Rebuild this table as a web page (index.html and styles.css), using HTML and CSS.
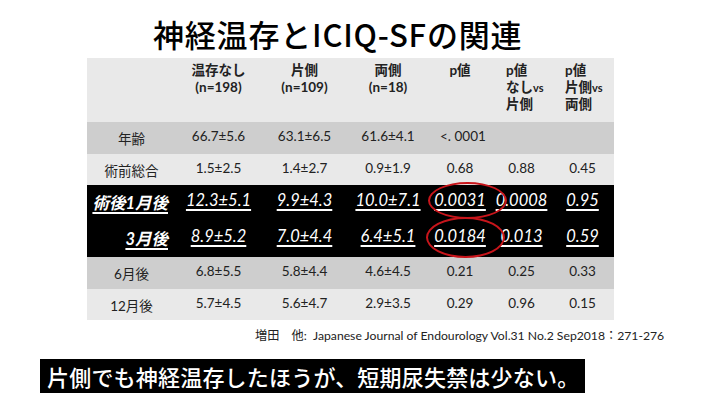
FILE: index.html
```html
<!DOCTYPE html>
<html lang="ja">
<head>
    <meta charset="UTF-8">
    <title>神経温存とICIQ-SFの関連</title>
    <link rel="stylesheet" href="styles.css">
</head>
<body>
    <div class="slide">
        <h1 class="title">神経温存とICIQ-SFの関連</h1>

        <div class="table-wrap">
            <table class="results">
                <colgroup>
                    <col class="c-label">
                    <col class="c-none">
                    <col class="c-one">
                    <col class="c-both">
                    <col class="c-p">
                    <col class="c-p2">
                    <col class="c-p3">
                </colgroup>
                <thead>
                    <tr class="head">
                        <th></th>
                        <th>温存なし<br>(n=198)</th>
                        <th>片側<br>(n=109)</th>
                        <th>両側<br>(n=18)</th>
                        <th>p値</th>
                        <th class="left">p値<br>なし<span class="vs">vs</span><br>片側</th>
                        <th class="left">p値<br>片側<span class="vs">vs</span><br>両側</th>
                    </tr>
                </thead>
                <tbody>
                    <tr class="dark">
                        <td>年齢</td>
                        <td>66.7±5.6</td>
                        <td>63.1±6.5</td>
                        <td>61.6±4.1</td>
                        <td class="lt">&lt;. 0001</td>
                        <td></td>
                        <td></td>
                    </tr>
                    <tr class="light">
                        <td>術前総合</td>
                        <td>1.5±2.5</td>
                        <td>1.4±2.7</td>
                        <td>0.9±1.9</td>
                        <td>0.68</td>
                        <td>0.88</td>
                        <td>0.45</td>
                    </tr>
                    <tr class="hl">
                        <td class="label"><u>術後1月後</u></td>
                        <td><u>12.3±5.1</u></td>
                        <td><u>9.9±4.3</u></td>
                        <td><u>10.0±7.1</u></td>
                        <td><u>0.0031</u></td>
                        <td><u>0.0008</u></td>
                        <td><u>0.95</u></td>
                    </tr>
                    <tr class="hl">
                        <td class="label"><u>3月後</u></td>
                        <td><u>8.9±5.2</u></td>
                        <td><u>7.0±4.4</u></td>
                        <td><u>6.4±5.1</u></td>
                        <td><u>0.0184</u></td>
                        <td><u>0.013</u></td>
                        <td><u>0.59</u></td>
                    </tr>
                    <tr class="dark">
                        <td>6月後</td>
                        <td>6.8±5.5</td>
                        <td>5.8±4.4</td>
                        <td>4.6±4.5</td>
                        <td>0.21</td>
                        <td>0.25</td>
                        <td>0.33</td>
                    </tr>
                    <tr class="light">
                        <td>12月後</td>
                        <td>5.7±4.5</td>
                        <td>5.6±4.7</td>
                        <td>2.9±3.5</td>
                        <td>0.29</td>
                        <td>0.96</td>
                        <td>0.15</td>
                    </tr>
                </tbody>
            </table>
            <!-- red circles drawn over the p values -->
            <div class="ring ring-1"></div>
            <div class="ring ring-2"></div>
        </div>

        <p class="source">増田　他:&nbsp; Japanese Journal of Endourology Vol.31 No.2 Sep2018：271-276</p>

        <div class="summary">片側でも神経温存したほうが、短期尿失禁は少ない。</div>
    </div>
</body>
</html>
```

FILE: styles.css
```css
body {
    margin: 0;
    background-color: #ffffff;
    font-family: "Lato", "Noto Sans CJK JP", sans-serif;
    color: #222;
}

.slide {
    width: 720px;
    height: 405px;
    overflow: hidden;
}

.title {
    margin: 0;
    padding: 12px 0 0 153px;
    height: 46px;
    font-family: "Noto Sans CJK JP", sans-serif;
    font-size: 31px;
    font-weight: 500;
    line-height: 44px;
    color: #000;
    letter-spacing: 0.8px;
}

.table-wrap {
    position: relative;
    margin-left: 87px;
    width: 527px;
}

.results {
    width: 527px;
    border-collapse: collapse;
    table-layout: fixed;
    font-size: 13.5px;
}

.c-label { width: 89px; }
.c-none  { width: 85px; }
.c-one   { width: 87px; }
.c-both  { width: 80px; }
.c-p     { width: 64px; }
.c-p2    { width: 59px; }
.c-p3    { width: 63px; }

.results th,
.results td {
    padding: 0;
    text-align: center;
    font-family: "Lato", "Noto Sans CJK JP", sans-serif;
}

.head {
    height: 64px;
    background-color: #e9e9e9;
}

.head th {
    vertical-align: top;
    padding-top: 4px;
    font-size: 13.5px;
    font-weight: 700;
    line-height: 17px;
    color: #222;
}

.head th.left {
    text-align: left;
    padding-left: 14px;
}

.head .vs {
    font-size: 11px;
}

.dark {
    height: 32px;
    background-color: #cecece;
}

.light {
    height: 31px;
    background-color: #e9e9e9;
}

.dark td,
.light td {
    vertical-align: top;
    padding-top: 6px;
}

.results td.lt {
    text-align: left;
    padding-left: 12px;
}

.hl {
    height: 36px;
    background-color: #000;
    color: #fff;
    font-size: 16.5px;
    font-style: italic;
}

.hl td {
    vertical-align: top;
    padding-top: 5px;
}

.hl u {
    text-decoration-thickness: 1.5px;
    text-underline-offset: 3px;
}

.hl td.label {
    text-align: right;
    padding-right: 8px;
    font-weight: 700;
}

.ring {
    position: absolute;
    border: 2px solid #c8151b;
    border-radius: 50%;
    box-sizing: border-box;
}

.ring-1 {
    left: 341px;
    top: 124px;
    width: 79px;
    height: 37px;
}

.ring-2 {
    left: 339px;
    top: 159px;
    width: 79px;
    height: 41px;
}

.source {
    margin: 8px 0 0 255px;
    font-size: 12.2px;
    line-height: 16px;
    color: #222;
}

.summary {
    display: inline-block;
    margin: 15px 0 0 40px;
    padding: 2px 6px 2px 7px;
    background-color: #000;
    color: #fff;
    font-family: "Noto Sans CJK JP", sans-serif;
    font-size: 22px;
    font-weight: 500;
    line-height: 30px;
    letter-spacing: 0.2px;
}
```
